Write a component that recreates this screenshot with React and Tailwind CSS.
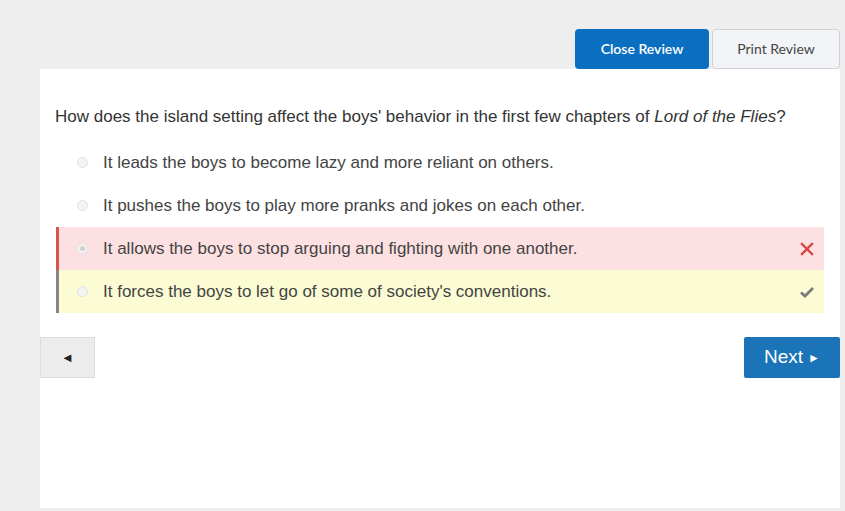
import React from "react";

const options = [
  { id: 1, text: "It leads the boys to become lazy and more reliant on others." },
  { id: 2, text: "It pushes the boys to play more pranks and jokes on each other." },
  { id: 3, text: "It allows the boys to stop arguing and fighting with one another.", state: "wrong", checked: true },
  { id: 4, text: "It forces the boys to let go of some of society's conventions.", state: "right" },
];

function Radio({ checked }) {
  return (
    <span className="flex h-[11px] w-[11px] shrink-0 items-center justify-center rounded-full border border-[#e2e2e2] bg-[#f4f4f4]">
      {checked && <span className="h-[5px] w-[5px] rounded-full bg-[#cfcfcf]" />}
    </span>
  );
}

function OptionRow({ option }) {
  const rowStyle =
    option.state === "wrong"
      ? "bg-[#fde1e2] border-l-[3px] border-[#d9534f]"
      : option.state === "right"
      ? "bg-[#fbfcd3] border-l-[3px] border-[#858585]"
      : "border-l-[3px] border-transparent";

  return (
    <div className={`flex h-[43px] items-center pl-[18px] pr-[8px] ${rowStyle}`}>
      <Radio checked={option.checked} />
      <span className="ml-[15px] flex-1 text-[17px] text-[#444]">{option.text}</span>
      {option.state === "wrong" && (
        <svg width="14" height="14" viewBox="0 0 14 14" className="mr-[2px]">
          <path d="M2 2 L12 12 M12 2 L2 12" stroke="#d9463f" strokeWidth="2.4" strokeLinecap="square" />
        </svg>
      )}
      {option.state === "right" && (
        <svg width="16" height="14" viewBox="0 0 16 14" className="mr-[1px]">
          <path d="M2 7.5 L6 11 L14 3" fill="none" stroke="#7b7b7b" strokeWidth="2.8" />
        </svg>
      )}
    </div>
  );
}

export default function App() {
  return (
    <div className="min-h-[511px] w-[845px] bg-[#eeeeee] font-['Liberation_Sans',Arial,sans-serif]">
      <div className="flex justify-end gap-[3px] pr-[5px] pt-[29px]">
        <button className="h-[40px] w-[134px] rounded-[4px] bg-[#0b6fc1] pb-px font-['Lato',sans-serif] text-[14px] font-semibold text-white">
          Close Review
        </button>
        <button className="h-[40px] w-[128px] rounded-[4px] border border-[#cfd3d8] bg-[#f2f4f7] pb-px font-['Lato',sans-serif] text-[14px] text-[#444]">
          Print Review
        </button>
      </div>
      <div className="ml-[40px] mr-[5px] h-[439px] bg-white pl-[15px] pr-[16px] pt-[36px]">
        <p className="h-[24px] text-[17px] leading-[24px] text-[#333]">
          How does the island setting affect the boys' behavior in the first few chapters of{" "}
          <i>Lord of the Flies</i>?
        </p>
        <div className="ml-px mt-[12px] flex flex-col">
          {options.map((o) => (
            <OptionRow key={o.id} option={o} />
          ))}
        </div>
        <div className="-ml-[15px] -mr-[16px] mt-[24px] flex justify-between">
          <button className="flex h-[41px] w-[55px] items-center justify-center border border-[#dcdcdc] bg-[#ececec] text-[13px] text-[#222]">
            ◄
          </button>
          <button className="flex h-[41px] w-[96px] items-center justify-center gap-[5px] rounded-[2px] bg-[#1a74b7] text-[19px] text-white">
            Next <span className="text-[12px]">►</span>
          </button>
        </div>
      </div>
    </div>
  );
}
